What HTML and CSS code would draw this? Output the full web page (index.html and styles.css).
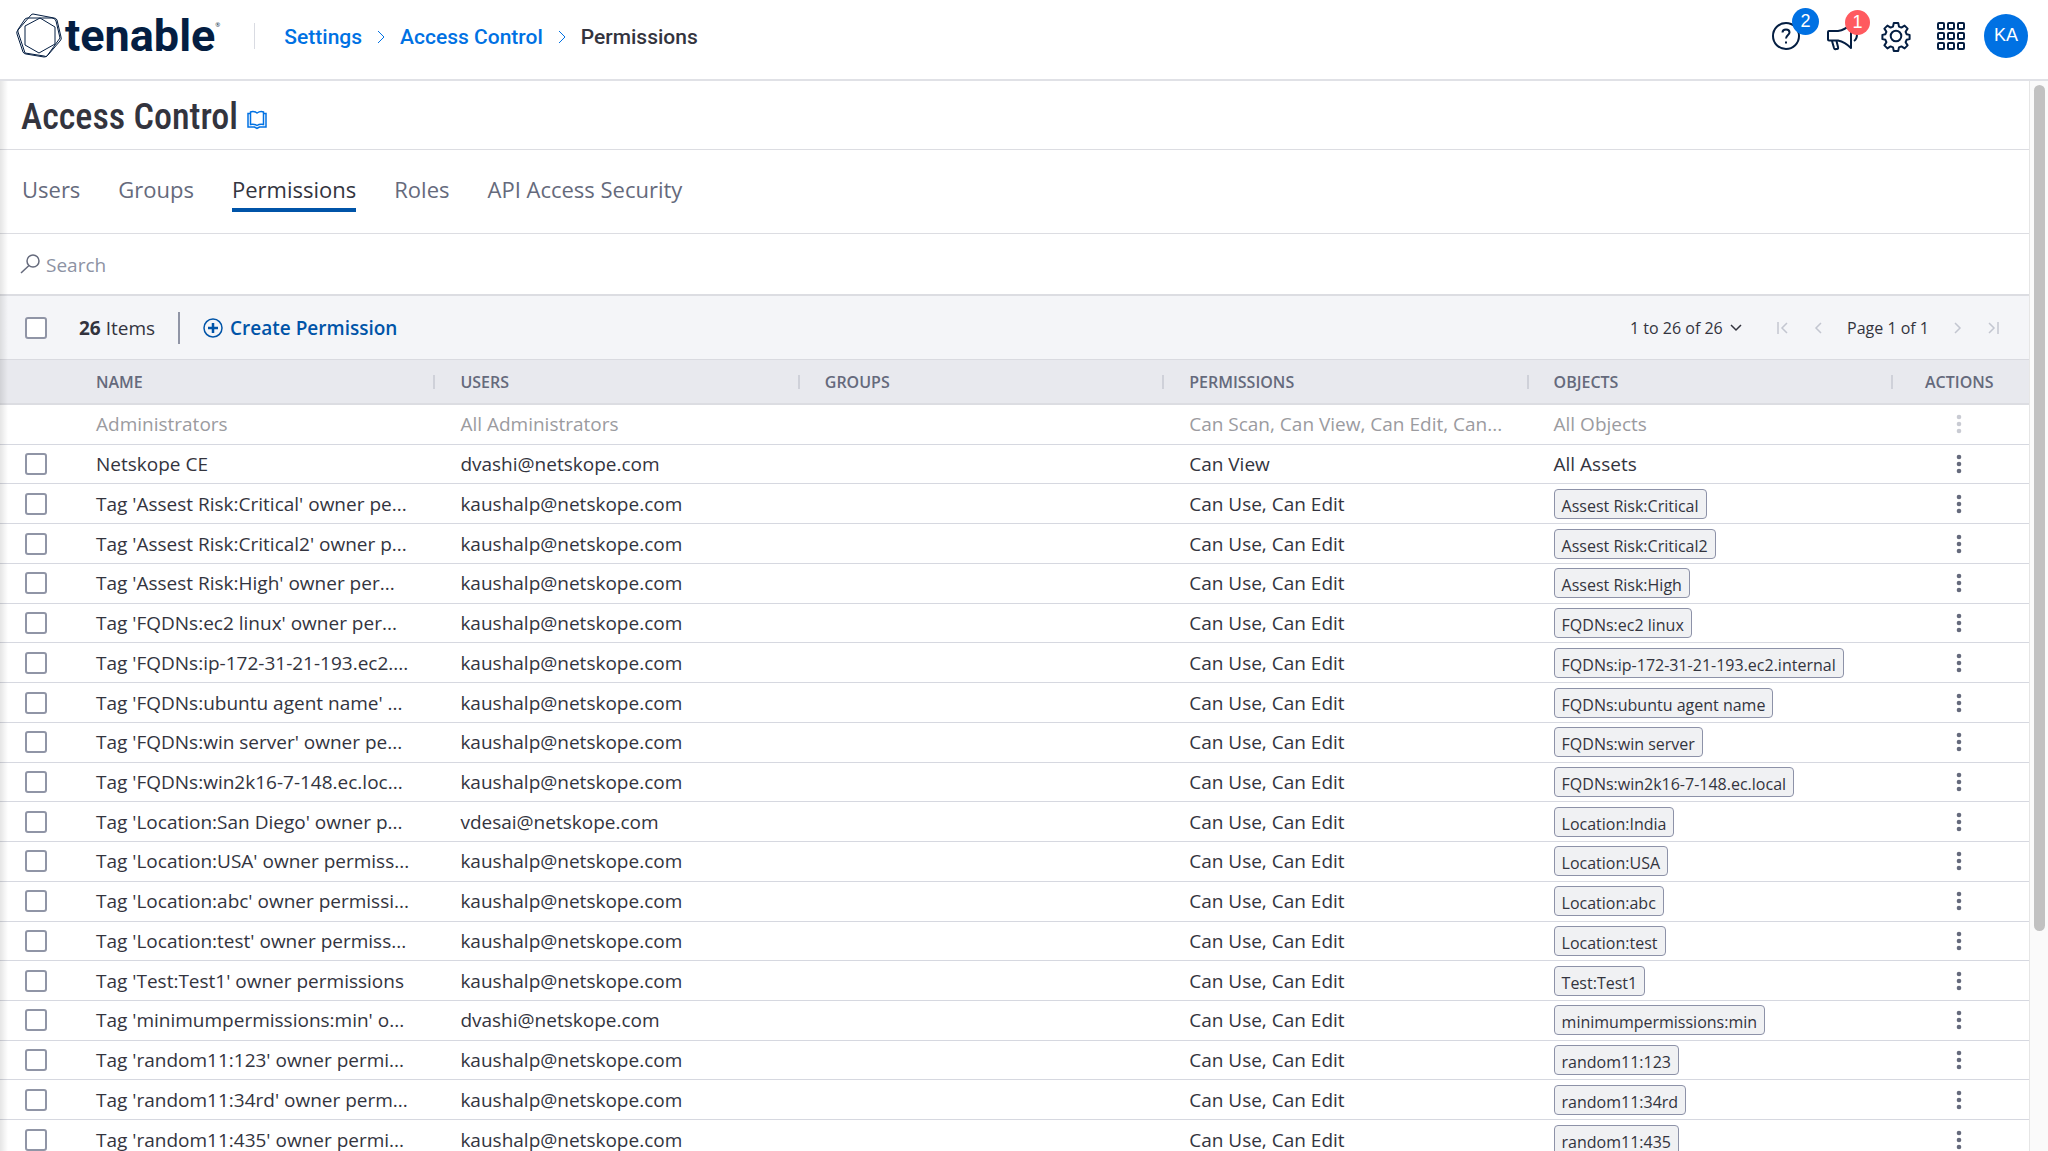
FILE: index.html
```
<!DOCTYPE html>
<html lang="en">
<head>
    <meta charset="UTF-8">
    <meta name="viewport" content="width=device-width, initial-scale=1.0">
    <title>Access Control - Permissions</title>
    <link rel="stylesheet" href="styles.css">
</head>
<body>
    <svg class="sprite" aria-hidden="true">
        <symbol id="dots" viewBox="0 0 6 20">
            <circle cx="3" cy="3" r="2.3"/><circle cx="3" cy="10" r="2.3"/><circle cx="3" cy="17" r="2.3"/>
        </symbol>
        <symbol id="chevron" viewBox="0 0 8 14">
            <path d="M1 1l6 6-6 6"/>
        </symbol>
    </svg>

    <header class="topbar">
        <a class="logo" href="#" aria-label="tenable">
            <svg class="logo-mark" viewBox="0 0 46 46" aria-hidden="true">
                <path d="M17 1L38 5Q40 5 41 7L45 24Q46 26 44 28L32 42Q31 44 28 44L10 41Q8 41 7 39L1 21Q0 19 2 17L15 2Q16 1 17 1Z"/>
                <path d="M11 5L36 5Q39 5 40 8L44 25L31 43Q30 44 28 43L9 40L2 19Q1 17 3 15L9 6Z"/>
                <path d="M24 5L39 14V31L23 40L9 32V13Z"/>
            </svg>
            <span class="logo-text">tenable</span><span class="logo-reg">&reg;</span>
        </a>
        <nav class="breadcrumb" aria-label="Breadcrumb">
            <a href="#">Settings</a>
            <svg class="crumb-arrow" aria-hidden="true"><use href="#chevron"/></svg>
            <a href="#">Access Control</a>
            <svg class="crumb-arrow" aria-hidden="true"><use href="#chevron"/></svg>
            <span>Permissions</span>
        </nav>
        <div class="top-actions">
            <button class="icon-btn" type="button" aria-label="Help">
                <svg viewBox="0 0 28 28" aria-hidden="true">
                    <circle cx="14" cy="14" r="13"/>
                    <path d="M10.500 10.500C10.500 6.500 17.500 6.500 17.500 10.500C17.500 13 14 13 14 16.500M14 19.500v2"/>
                </svg>
                <span class="badge badge-blue">2</span>
            </button>
            <button class="icon-btn" type="button" aria-label="Announcements">
                <svg viewBox="0 0 28 28" aria-hidden="true">
                    <path d="M1 10Q1 9 2 9H11Q18 8 24 2V26Q18 20 11 18.500H2Q1 18.500 1 17.500ZM5 19L7 26Q7.500 27.500 9 27H10Q11.500 27 11 25L9.500 19M27 19Q30 17 30 12"/>
                </svg>
                <span class="badge badge-red">1</span>
            </button>
            <button class="icon-btn" type="button" aria-label="Settings">
                <svg viewBox="0 0 28 28" aria-hidden="true">
                    <circle cx="14" cy="14" r="5.300"/>
                    <path d="M11.800 1h4.400l.8 3.600 2.400 1 3.200-2 3 3-2 3.200 1 2.400 3 .7v4.200l-3 .7-1 2.400 2 3.200-3 3-3.200-2-2.400 1-.8 3.600h-4.400l-.8-3.600-2.400-1-3.200 2-3-3 2-3.200-1-2.400-3-.7v-4.200l3-.7 1-2.400-2-3.200 3-3 3.200 2 2.400-1z"/>
                </svg>
            </button>
            <button class="icon-btn" type="button" aria-label="Apps">
                <svg viewBox="0 0 28 28" aria-hidden="true">
                    <rect x="1" y="1" width="6" height="6" rx="1"/><rect x="11" y="1" width="6" height="6" rx="1"/><rect x="21" y="1" width="6" height="6" rx="1"/>
                    <rect x="1" y="11" width="6" height="6" rx="1"/><rect x="11" y="11" width="6" height="6" rx="1"/><rect x="21" y="11" width="6" height="6" rx="1"/>
                    <rect x="1" y="21" width="6" height="6" rx="1"/><rect x="11" y="21" width="6" height="6" rx="1"/><rect x="21" y="21" width="6" height="6" rx="1"/>
                </svg>
            </button>
            <button class="avatar" type="button">KA</button>
        </div>
    </header>

    <div class="page">
        <main class="content">
            <div class="title-bar">
                <h1>Access Control</h1>
                <a class="docs-link" href="#" aria-label="Documentation">
                    <svg viewBox="0 0 20 18" aria-hidden="true">
                        <path d="M10 2Q6.500 -.5 3.500 1V13.500Q7 12.500 10 14.500Q13 12.500 16.500 13.500V1Q13.500 -.5 10 2ZM3.500 2.500H1V16H7.500L10 17.500L12.500 16H19V2.500H16.500"/>
                    </svg>
                </a>
            </div>

            <nav class="tabs">
                <a href="#">Users</a>
                <a href="#">Groups</a>
                <a class="active" href="#">Permissions</a>
                <a href="#">Roles</a>
                <a href="#">API Access Security</a>
            </nav>

            <div class="search">
                <svg viewBox="0 0 20 20" aria-hidden="true">
                    <ellipse cx="13" cy="7" rx="6" ry="6"/><path d="M9 11.500L1 19"/>
                </svg>
                <input type="text" placeholder="Search" aria-label="Search">
            </div>

            <div class="toolbar">
                <input class="check" type="checkbox" aria-label="Select all">
                <div class="count"><strong>26</strong> Items</div>
                <button class="create" type="button">
                    <svg viewBox="0 0 20 20" aria-hidden="true">
                        <circle cx="10" cy="10" r="9"/><path class="plus" d="M10 5v10M5 10h10"/>
                    </svg>
                    Create Permission
                </button>
                <div class="pager">
                    <div class="range">
                        <select aria-label="Items shown"><option>1 to 26 of 26</option></select>
                        <svg viewBox="0 0 12 8" aria-hidden="true"><path d="M1 1l5 5 5-5"/></svg>
                    </div>
                    <button class="page-btn" type="button" aria-label="First page" disabled><svg viewBox="0 0 12 12" aria-hidden="true"><path d="M1 0v12M10 1L5 6l5 5"/></svg></button>
                    <button class="page-btn" type="button" aria-label="Previous page" disabled><svg viewBox="0 0 12 12" aria-hidden="true"><path d="M9 1L4 6l5 5"/></svg></button>
                    <span class="page-label">Page 1 of 1</span>
                    <button class="page-btn" type="button" aria-label="Next page" disabled><svg viewBox="0 0 12 12" aria-hidden="true"><path d="M3 1l5 5-5 5"/></svg></button>
                    <button class="page-btn" type="button" aria-label="Last page" disabled><svg viewBox="0 0 12 12" aria-hidden="true"><path d="M11 0v12M2 1l5 5-5 5"/></svg></button>
                </div>
            </div>

            <table class="grid">
                <thead>
                    <tr>
                        <th class="col-check"></th>
                        <th><span>Name</span></th>
                        <th><span>Users</span></th>
                        <th><span>Groups</span></th>
                        <th><span>Permissions</span></th>
                        <th><span>Objects</span></th>
                        <th class="col-actions">Actions</th>
                    </tr>
                </thead>
                <tbody>
                    <tr class="disabled">
                        <td></td><td>Administrators</td><td>All Administrators</td><td></td><td>Can Scan, Can View, Can Edit, Can...</td><td>All Objects</td>
                        <td><button class="more" type="button" aria-label="Actions" disabled><svg><use href="#dots"/></svg></button></td>
                    </tr>
                    <tr>
                        <td><input class="check" type="checkbox" aria-label="Select row"></td><td>Netskope CE</td><td>dvashi@netskope.com</td><td></td><td>Can View</td><td>All Assets</td>
                        <td><button class="more" type="button" aria-label="Actions"><svg><use href="#dots"/></svg></button></td>
                    </tr>
                    <tr>
                        <td><input class="check" type="checkbox" aria-label="Select row"></td><td>Tag 'Assest Risk:Critical' owner pe...</td><td>kaushalp@netskope.com</td><td></td><td>Can Use, Can Edit</td><td><span class="tag">Assest Risk:Critical</span></td>
                        <td><button class="more" type="button" aria-label="Actions"><svg><use href="#dots"/></svg></button></td>
                    </tr>
                    <tr>
                        <td><input class="check" type="checkbox" aria-label="Select row"></td><td>Tag 'Assest Risk:Critical2' owner p...</td><td>kaushalp@netskope.com</td><td></td><td>Can Use, Can Edit</td><td><span class="tag">Assest Risk:Critical2</span></td>
                        <td><button class="more" type="button" aria-label="Actions"><svg><use href="#dots"/></svg></button></td>
                    </tr>
                    <tr>
                        <td><input class="check" type="checkbox" aria-label="Select row"></td><td>Tag 'Assest Risk:High' owner per...</td><td>kaushalp@netskope.com</td><td></td><td>Can Use, Can Edit</td><td><span class="tag">Assest Risk:High</span></td>
                        <td><button class="more" type="button" aria-label="Actions"><svg><use href="#dots"/></svg></button></td>
                    </tr>
                    <tr>
                        <td><input class="check" type="checkbox" aria-label="Select row"></td><td>Tag 'FQDNs:ec2 linux' owner per...</td><td>kaushalp@netskope.com</td><td></td><td>Can Use, Can Edit</td><td><span class="tag">FQDNs:ec2 linux</span></td>
                        <td><button class="more" type="button" aria-label="Actions"><svg><use href="#dots"/></svg></button></td>
                    </tr>
                    <tr>
                        <td><input class="check" type="checkbox" aria-label="Select row"></td><td>Tag 'FQDNs:ip-172-31-21-193.ec2....</td><td>kaushalp@netskope.com</td><td></td><td>Can Use, Can Edit</td><td><span class="tag">FQDNs:ip-172-31-21-193.ec2.internal</span></td>
                        <td><button class="more" type="button" aria-label="Actions"><svg><use href="#dots"/></svg></button></td>
                    </tr>
                    <tr>
                        <td><input class="check" type="checkbox" aria-label="Select row"></td><td>Tag 'FQDNs:ubuntu agent name' ...</td><td>kaushalp@netskope.com</td><td></td><td>Can Use, Can Edit</td><td><span class="tag">FQDNs:ubuntu agent name</span></td>
                        <td><button class="more" type="button" aria-label="Actions"><svg><use href="#dots"/></svg></button></td>
                    </tr>
                    <tr>
                        <td><input class="check" type="checkbox" aria-label="Select row"></td><td>Tag 'FQDNs:win server' owner pe...</td><td>kaushalp@netskope.com</td><td></td><td>Can Use, Can Edit</td><td><span class="tag">FQDNs:win server</span></td>
                        <td><button class="more" type="button" aria-label="Actions"><svg><use href="#dots"/></svg></button></td>
                    </tr>
                    <tr>
                        <td><input class="check" type="checkbox" aria-label="Select row"></td><td>Tag 'FQDNs:win2k16-7-148.ec.loc...</td><td>kaushalp@netskope.com</td><td></td><td>Can Use, Can Edit</td><td><span class="tag">FQDNs:win2k16-7-148.ec.local</span></td>
                        <td><button class="more" type="button" aria-label="Actions"><svg><use href="#dots"/></svg></button></td>
                    </tr>
                    <tr>
                        <td><input class="check" type="checkbox" aria-label="Select row"></td><td>Tag 'Location:San Diego' owner p...</td><td>vdesai@netskope.com</td><td></td><td>Can Use, Can Edit</td><td><span class="tag">Location:India</span></td>
                        <td><button class="more" type="button" aria-label="Actions"><svg><use href="#dots"/></svg></button></td>
                    </tr>
                    <tr>
                        <td><input class="check" type="checkbox" aria-label="Select row"></td><td>Tag 'Location:USA' owner permiss...</td><td>kaushalp@netskope.com</td><td></td><td>Can Use, Can Edit</td><td><span class="tag">Location:USA</span></td>
                        <td><button class="more" type="button" aria-label="Actions"><svg><use href="#dots"/></svg></button></td>
                    </tr>
                    <tr>
                        <td><input class="check" type="checkbox" aria-label="Select row"></td><td>Tag 'Location:abc' owner permissi...</td><td>kaushalp@netskope.com</td><td></td><td>Can Use, Can Edit</td><td><span class="tag">Location:abc</span></td>
                        <td><button class="more" type="button" aria-label="Actions"><svg><use href="#dots"/></svg></button></td>
                    </tr>
                    <tr>
                        <td><input class="check" type="checkbox" aria-label="Select row"></td><td>Tag 'Location:test' owner permiss...</td><td>kaushalp@netskope.com</td><td></td><td>Can Use, Can Edit</td><td><span class="tag">Location:test</span></td>
                        <td><button class="more" type="button" aria-label="Actions"><svg><use href="#dots"/></svg></button></td>
                    </tr>
                    <tr>
                        <td><input class="check" type="checkbox" aria-label="Select row"></td><td>Tag 'Test:Test1' owner permissions</td><td>kaushalp@netskope.com</td><td></td><td>Can Use, Can Edit</td><td><span class="tag">Test:Test1</span></td>
                        <td><button class="more" type="button" aria-label="Actions"><svg><use href="#dots"/></svg></button></td>
                    </tr>
                    <tr>
                        <td><input class="check" type="checkbox" aria-label="Select row"></td><td>Tag 'minimumpermissions:min' o...</td><td>dvashi@netskope.com</td><td></td><td>Can Use, Can Edit</td><td><span class="tag">minimumpermissions:min</span></td>
                        <td><button class="more" type="button" aria-label="Actions"><svg><use href="#dots"/></svg></button></td>
                    </tr>
                    <tr>
                        <td><input class="check" type="checkbox" aria-label="Select row"></td><td>Tag 'random11:123' owner permi...</td><td>kaushalp@netskope.com</td><td></td><td>Can Use, Can Edit</td><td><span class="tag">random11:123</span></td>
                        <td><button class="more" type="button" aria-label="Actions"><svg><use href="#dots"/></svg></button></td>
                    </tr>
                    <tr>
                        <td><input class="check" type="checkbox" aria-label="Select row"></td><td>Tag 'random11:34rd' owner perm...</td><td>kaushalp@netskope.com</td><td></td><td>Can Use, Can Edit</td><td><span class="tag">random11:34rd</span></td>
                        <td><button class="more" type="button" aria-label="Actions"><svg><use href="#dots"/></svg></button></td>
                    </tr>
                    <tr>
                        <td><input class="check" type="checkbox" aria-label="Select row"></td><td>Tag 'random11:435' owner permi...</td><td>kaushalp@netskope.com</td><td></td><td>Can Use, Can Edit</td><td><span class="tag">random11:435</span></td>
                        <td><button class="more" type="button" aria-label="Actions"><svg><use href="#dots"/></svg></button></td>
                    </tr>
                </tbody>
            </table>
        </main>
        <div class="scroll-track"><div class="scroll-thumb"></div></div>
    </div>
</body>
</html>
```

FILE: styles.css
```
* {
    box-sizing: border-box;
}
body {
    margin: 0;
    height: 100vh;
    display: flex;
    flex-direction: column;
    overflow: hidden;
    font-family: "Open Sans", "Noto Sans", sans-serif;
    font-size: 19px;
    color: #33343e;
    background-color: #ffffff;
}
a {
    text-decoration: none;
}
button, input, select {
    font-family: inherit;
    color: inherit;
}
button {
    padding: 0;
    border: none;
    background: none;
    cursor: pointer;
}
svg {
    display: block;
    fill: none;
    stroke: currentColor;
    overflow: visible;
}
.sprite {
    position: absolute;
    width: 0;
    height: 0;
}

/* top bar */
.topbar {
    flex: none;
    height: 81px;
    display: flex;
    align-items: center;
    padding: 0 20px 8px 16px;
    border-bottom: 2px solid #e0e1e6;
}
.logo {
    display: flex;
    align-items: center;
    color: #041e42;
}
.logo-mark {
    width: 46px;
    height: 46px;
}
.logo-text {
    margin-left: 3px;
    font-family: Roboto, "Liberation Sans", sans-serif;
    font-size: 45px;
    line-height: 46px;
    font-weight: 700;
}
.logo-reg {
    align-self: flex-start;
    margin-top: 8px;
    font-size: 6px;
}
.breadcrumb {
    display: flex;
    align-items: center;
    gap: 15px;
    margin-left: 34px;
    padding: 2px 0 0 29px;
    border-left: 1px solid #d9dbe2;
    font-family: Roboto, "Liberation Sans", sans-serif;
    font-size: 21px;
    line-height: 24px;
    font-weight: 500;
}
.breadcrumb a {
    color: #0071e3;
}
.crumb-arrow {
    width: 8px;
    height: 14px;
    color: #0071e3;
}
.top-actions {
    display: flex;
    align-items: center;
    gap: 27px;
    margin-left: auto;
}
.icon-btn {
    position: relative;
    width: 28px;
    height: 28px;
    color: #041e42;
}
.icon-btn svg {
    stroke-width: 2;
    stroke-linejoin: round;
}
.badge {
    position: absolute;
    display: flex;
    align-items: center;
    justify-content: center;
    border-radius: 50%;
    color: #ffffff;
    font-family: "Liberation Sans", Arial, sans-serif;
    font-size: 18px;
}
.badge-blue {
    top: -14px;
    left: 20px;
    width: 27px;
    height: 27px;
    background-color: #0071e3;
}
.badge-red {
    top: -12px;
    left: 18px;
    width: 25px;
    height: 25px;
    background-color: #ff5a5f;
}
.avatar {
    width: 44px;
    height: 44px;
    margin-left: -8px;
    border-radius: 50%;
    background-color: #0071e3;
    color: #ffffff;
    font-family: "Liberation Sans", Arial, sans-serif;
    font-size: 18px;
}

/* page */
.page {
    flex: 1;
    min-height: 0;
    display: flex;
}
.content {
    position: relative;
    flex: 1;
    min-width: 0;
    overflow: hidden;
}
.content::before {
    content: "";
    position: absolute;
    top: 0;
    bottom: 0;
    left: 0;
    width: 8px;
    background: linear-gradient(to right, rgba(0, 0, 0, 0.1), rgba(0, 0, 0, 0));
}
.title-bar {
    height: 69px;
    display: flex;
    align-items: center;
    gap: 9px;
    padding: 3px 21px 0;
    border-bottom: 1px solid #dcdde2;
}
h1 {
    margin: 0;
    font-family: "Liberation Sans Narrow", "Arial Narrow", "Roboto Condensed", sans-serif;
    font-size: 36px;
    line-height: 48px;
    font-weight: 500;
}
.docs-link {
    margin-top: 6px;
    color: #0071e3;
}
.docs-link svg {
    width: 20px;
    height: 18px;
    stroke-width: 1.5;
}
.tabs {
    height: 84px;
    display: flex;
    align-items: center;
    gap: 38px;
    padding: 0 22px 4px;
    border-bottom: 1px solid #dcdde2;
}
.tabs a {
    padding: 6px 0 4px;
    border-bottom: 4px solid transparent;
    font-size: 22px;
    line-height: 30px;
    color: #656a7c;
}
.tabs .active {
    color: #33343e;
    border-bottom-color: #0054a8;
}
.search {
    height: 62px;
    display: flex;
    align-items: center;
    gap: 6px;
    padding: 0 20px;
    border-bottom: 2px solid #dcdde2;
}
.search svg {
    width: 20px;
    height: 20px;
    color: #656a7c;
    stroke-width: 1.5;
}
.search input {
    flex: 1;
    padding: 2px 0 0;
    border: none;
    outline: none;
    font-size: 19px;
}
.search input::placeholder {
    color: #8d92a3;
    opacity: 1;
}

/* toolbar */
.toolbar {
    height: 64px;
    display: flex;
    align-items: center;
    padding: 0 30px 0 25px;
    background-color: #f4f5f8;
    border-bottom: 1px solid #d9dae0;
}
.check {
    appearance: none;
    display: block;
    width: 22px;
    height: 22px;
    margin: 0;
    border: 2px solid #9095a6;
    border-radius: 3px;
    background-color: #ffffff;
}
.count {
    margin-left: 32px;
    padding-right: 23px;
    border-right: 2px solid #9095a6;
    line-height: 32px;
}
.create {
    display: flex;
    align-items: center;
    gap: 7px;
    margin-left: 23px;
    font-size: 19px;
    font-weight: 600;
    color: #0054a8;
}
.create svg {
    width: 20px;
    height: 20px;
    stroke-width: 1.5;
}
.create .plus {
    stroke-width: 2.5;
}
.pager {
    display: flex;
    align-items: center;
    gap: 23px;
    margin-left: auto;
    font-size: 16px;
}
.range {
    display: flex;
    align-items: center;
    gap: 7px;
    margin-right: 12px;
}
.range select {
    appearance: none;
    padding: 0;
    border: none;
    background: none;
    font-size: 16px;
}
.range svg {
    width: 12px;
    height: 8px;
    stroke-width: 1.5;
}
.page-btn {
    color: #c3c6d0;
}
.page-btn svg {
    width: 12px;
    height: 12px;
    stroke-width: 1.5;
}

/* permissions table */
.grid {
    width: 100%;
    height: 800px;
    table-layout: fixed;
    border-collapse: separate;
    border-spacing: 0;
}
.grid th {
    height: 45px;
    padding: 0 0 0 25px;
    background-color: #e8e9ee;
    border-bottom: 2px solid #dcdde2;
    font-size: 16px;
    font-weight: 600;
    text-align: left;
    text-transform: uppercase;
    color: #656a7c;
}
.grid th span {
    display: block;
    line-height: 14px;
    border-right: 2px solid #cfd1d9;
}
.grid .col-check {
    width: 71px;
}
.grid .col-actions {
    width: 136px;
    padding-left: 32px;
}
.grid td {
    height: 39px;
    padding: 0 0 0 25px;
    border-bottom: 1px solid #d6d8e0;
    line-height: 24px;
    white-space: nowrap;
}
.grid .disabled {
    color: #9b9b9f;
}
.grid td:last-child {
    padding: 0 0 0 63px;
}
.more {
    display: block;
    color: #656a7c;
}
.more:disabled {
    color: #c9cbd3;
}
.more svg {
    width: 6px;
    height: 20px;
    fill: currentColor;
    stroke: none;
}
.tag {
    display: block;
    width: fit-content;
    padding: 4px 7px 0;
    border: 1px solid #8d92a8;
    border-radius: 4px;
    background-color: #f0f1f3;
    font-size: 16px;
}

/* scrollbar */
.scroll-track {
    flex: none;
    width: 19px;
    padding: 4px 3px 8px 4px;
    background-color: #fafafa;
    border-left: 1px solid #e6e6e6;
}
.scroll-thumb {
    height: 80%;
    border-radius: 6px;
    background-color: #c1c1c1;
}
```
